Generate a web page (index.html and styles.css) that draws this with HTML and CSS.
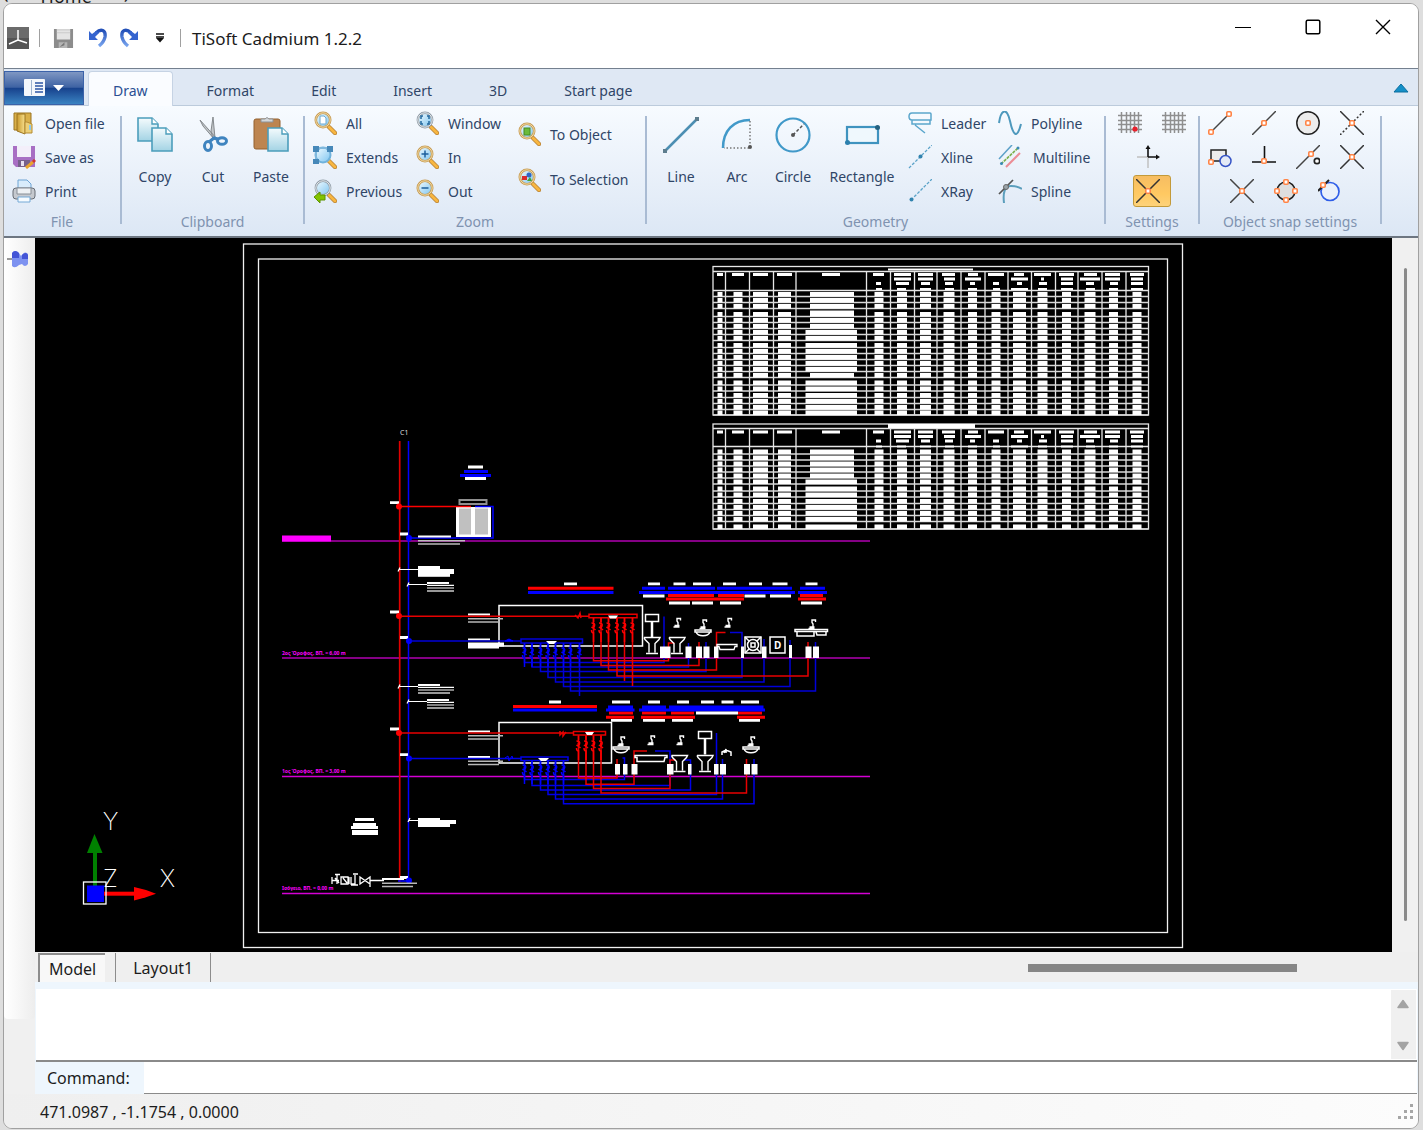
FILE: index.html
```html
<!DOCTYPE html>
<html lang="en">
<head>
<meta charset="utf-8">
<title>TiSoft Cadmium 1.2.2</title>
<link rel="stylesheet" href="styles.css">
</head>
<body>
<svg class="defs" aria-hidden="true">
  <defs>
    <linearGradient id="lens" x1="0" y1="0" x2="1" y2="1"><stop offset="0" stop-color="#f2fbff"/><stop offset="1" stop-color="#7cc4f0"/></linearGradient>
    <linearGradient id="paper" x1="0" y1="0" x2="0" y2="1"><stop offset="0" stop-color="#f4fbfd"/><stop offset="1" stop-color="#a3d3e4"/></linearGradient>
    <linearGradient id="folder" x1="0" y1="0" x2="1" y2="0"><stop offset="0" stop-color="#c99a2e"/><stop offset="1" stop-color="#f7e08e"/></linearGradient>
    <linearGradient id="swoosh" x1="0" y1="0" x2="0" y2="1"><stop offset="0" stop-color="#2350b8"/><stop offset="1" stop-color="#78a4ee"/></linearGradient>
    <g id="handle"><path d="M16 16L22 22" stroke="#b9853a" stroke-width="4.4" stroke-linecap="round"/><path d="M16 16L22 22" stroke="#f8b640" stroke-width="2.8" stroke-linecap="round"/></g>
    <g id="magnifier"><use href="#handle"/><circle cx="10" cy="9" r="7.2" fill="url(#lens)" stroke="#c79b52" stroke-width="2.6"/><circle cx="10" cy="9" r="7.2" fill="none" stroke="#f0d9a4" stroke-width="1"/></g>
    <g id="magnifier-grey"><use href="#handle"/><circle cx="10" cy="9" r="7.2" fill="url(#lens)" stroke="#8e9aa5" stroke-width="2.4"/><circle cx="10" cy="9" r="7.2" fill="none" stroke="#e2e7ea" stroke-width="1"/></g>
    <g id="sheet"><path d="M1 1h14l6 6v17H1z" fill="url(#paper)" stroke="#4b9dbb" stroke-width="1.6"/><path d="M15 1v6h6" fill="#fff" stroke="#4b9dbb" stroke-width="1.4"/></g>
    <g id="node"><rect x="-2.2" y="-2.2" width="4.4" height="4.4" rx="1" fill="#fff" stroke="#ff8446" stroke-width="1.6"/></g>
    <path id="grid" d="M0 4.500h24M0 9.500h24M0 13.500h24M0 18.500h24M3.500 1v21M8.500 1v21M12.500 1v21M16.500 1v21M20.500 1v21" stroke="#8f8f8f" stroke-width="1.500"/>

    <g id="cells">
      <path d="M713 0H1148.500" stroke="#d8d8d8" stroke-width="1.300"/>
      <path d="M717.500-2.300h5M733.500-2.300h9M753-2.300h15M778-2.300h13M874.500-2.300h9M897-2.300h10M920-2.300h11M943.500-2.300h11M968-2.300h9M991.500-2.300h9M1013-2.300h13M1037.500-2.300h10M1062-2.300h9M1084.500-2.300h11M1109-2.300h9M1132.500-2.300h9" stroke="#fff" stroke-width="4.600"/>
    </g>
    <g id="row-a"><use href="#cells"/><path d="M810-2.300h44" stroke="#fff" stroke-width="4.600"/></g>
    <g id="row-b"><use href="#cells"/><path d="M805.500-2.300h51.500" stroke="#fff" stroke-width="4.600"/></g>
    <g id="schedule-head" stroke="#fff">
      <path d="M717 0h6M732 0h12M753 0h15M777 0h15M822 0h18M873 0h11M894 0h17M918 0h15M942 0h13M968 0h10M988 0h16M1014 0h10M1034 0h17M1059 0h15M1084 0h13M1105 0h15M1130 0h14M894 4.500h17M918 4.500h15M944 4.500h11M965 4.500h16M1011 4.500h17M1041 4.500h3M1061 4.500h12M1080 4.500h20M1105 4.500h15M1131 4.500h12" stroke-width="2.800"/>
      <path d="M876 9h5M896 9h13M921 9h9M945 9h8M970 9h5M993 9h6M1017 9h5M1039 9h8M1061 9h12M1086 9h8M1110 9h8M1131 9h12" stroke-width="2.800"/>
      <path d="M876 14.500h6M897 14.500h9M920 14.500h11M945 14.500h9M968 14.500h9M993 14.500h7M1011 14.500h17M1038 14.500h9M1061 14.500h12M1086 14.500h9M1109 14.500h9M1131 14.500h12" stroke-width="2"/>
    </g>

    <g id="leader-text" stroke="#fff" fill="none" stroke-width="1.200">
      <path d="M-1 2l2-4M0 0H19"/><path d="M19-1.500h22" stroke-width="2"/><path d="M19 .800h36M19 3.500h36"/><path d="M19 6.500h32"/>
    </g>
    <g id="pipe-text" stroke="#b8b8b8" fill="none" stroke-width="1.600">
      <path d="M0 0h22" stroke="#fff" stroke-width="2"/><path d="M0 4.300h35M0 7.500h31"/>
    </g>
    <g id="tap" stroke="#fff" fill="none" stroke-width="1.400"><path d="M-3.500 8.500h6M-2.500 7h5M1 7V4l-1-1.500V0h3.500v2"/></g>
    <g id="basin" stroke="#fff" fill="none" stroke-width="1.500"><path d="M-8 0H8V2H-8zM-7 2c2 5 12 5 14 0"/></g>
    <g id="pedestal" stroke="#fff" fill="none" stroke-width="1.400"><path d="M-8 0H8L7 2 3 6V15M-8 0l1 2 4 4v9M-6 16H6"/></g>
    <g id="cistern" stroke="#fff" fill="none" stroke-width="1.500"><rect x="-6.500" y="0" width="13" height="7"/><path d="M0 7v16" stroke-width="2.500"/></g>
    <g id="tray" stroke="#fff" fill="none" stroke-width="1.300"><path d="M0 0H20V2H18L17 5H3L2 2H0z"/></g>
    <path id="valve" d="M0 0V4M-2 5q4 0 3 3t-3 1q3 2 4 3M-2 12q0 3 2 3V24M-1 8h2" fill="none" stroke-width="1.500"/>
  </defs>
</svg>

<div class="desktop">
  <div class="behind" aria-hidden="true"><span>‹</span><span>Home</span><span>›</span></div>
  <div class="window">
    <header class="titlebar">
      <div class="quick">
        <svg class="app-icon" viewBox="0 0 22 22"><rect width="22" height="22" fill="#555"/><path d="M0 0h22v11H0z" fill="#6b6b6b"/><path d="M11 3v10L2 17M11 13l9 3" fill="none" stroke="#fff" stroke-width="1.500"/></svg>
        <span class="rule"></span>
        <button class="q q-save" aria-label="Save"><svg viewBox="0 0 22 22"><path d="M1 1h20v20H1z" fill="#8c8c8c"/><path d="M4 1h14v11H4z" fill="#e4e4e4"/><path d="M4 2h14M4 5h14" stroke="#c8c8c8"/><path d="M6 15h9v6H6z" fill="#b5b5b5"/><path d="M7 20l5-5v3z" fill="#777"/></svg></button>
        <button class="q q-undo" aria-label="Undo"><svg viewBox="0 0 20 20"><path d="M8 5C13 0 18 2 17 9q-1 5-6 9" fill="none" stroke="url(#swoosh)" stroke-width="3.400"/><path d="M1 3v9h9L7 9l4-4-3-2-4 3z" fill="#3564cf"/></svg></button>
        <button class="q q-redo" aria-label="Redo"><svg viewBox="0 0 20 20"><path d="M12 5C7 0 2 2 3 9q1 5 6 9" fill="none" stroke="url(#swoosh)" stroke-width="3.400"/><path d="M19 3v9h-9l3-3-4-4 3-2 4 3z" fill="#3564cf"/></svg></button>
        <button class="q q-more" aria-label="Customize toolbar"><svg viewBox="0 0 10 10"><path d="M1 1h8M1 4h8" stroke="#111" stroke-width="1.300"/><path d="M1 5h8L5 9.500z" fill="#111"/></svg></button>
        <span class="rule rule-2"></span>
        <h1 class="title">TiSoft Cadmium 1.2.2</h1>
      </div>
      <div class="controls">
        <button aria-label="Minimize"><svg viewBox="0 0 16 16"><path d="M0 8.500h16" stroke="#000" stroke-width="1.200"/></svg></button>
        <button aria-label="Maximize"><svg viewBox="0 0 16 16"><rect x="1.200" y="1.200" width="13.600" height="13.600" rx="1.500" fill="none" stroke="#000" stroke-width="1.500"/></svg></button>
        <button aria-label="Close"><svg viewBox="0 0 16 16"><path d="M1 1l14 14M15 1L1 15" stroke="#000" stroke-width="1.400"/></svg></button>
      </div>
    </header>

    <nav class="tabs">
      <button class="app-menu" aria-label="Application menu">
        <svg viewBox="0 0 40 18"><rect width="21" height="17" rx="1" fill="#f4f7fb"/><path d="M7.500 1v15" stroke="#9fb4d0"/><path d="M11 4h8M11 7h8M11 10h8M11 13h8" stroke="#2c56a4" stroke-width="1.500"/><path d="M29 6h11l-5.500 6z" fill="#fff"/></svg>
      </button>
      <button class="tab active">Draw</button>
      <button class="tab">Format</button>
      <button class="tab">Edit</button>
      <button class="tab">Insert</button>
      <button class="tab">3D</button>
      <button class="tab">Start page</button>
      <button class="collapse" aria-label="Collapse ribbon"><svg viewBox="0 0 16 10"><path d="M1 9L8 1l7 8z" fill="#1590c8" stroke="#0d6f9f"/></svg></button>
    </nav>

    <div class="ribbon">
      <section class="group g-file">
        <div class="body">
          <div class="col">
            <button class="cmd"><svg viewBox="0 0 24 24"><path d="M2 2h17v17H2z" fill="#d9b04a" stroke="#9b7420"/><path d="M5 3h8v20l-8-3z" fill="url(#folder)" stroke="#9b7420"/><path d="M15 11l5 2v9h-7V11z" fill="#ecd078" stroke="#b58c33"/><path d="M18 14v5" stroke="#8fc7e8" stroke-width="2"/></svg>Open file</button>
            <button class="cmd"><svg viewBox="0 0 24 24"><path d="M1 1h22v21H4l-3-3z" fill="#a86fc4"/><path d="M5 1h14v11H5z" fill="#f3effa"/><path d="M6 15h12v7H6z" fill="#77618c"/><path d="M9 16h3v5H9z" fill="#e8e0f0"/><path d="M14 23l7-6" stroke="#eaa52e" stroke-width="3"/><path d="M21 17l2-2" stroke="#d3382c" stroke-width="3"/></svg>Save as</button>
            <button class="cmd"><svg viewBox="0 0 24 24"><path d="M6 11V1h9l4 4v6z" fill="#d9ecfb" stroke="#6ea4d4"/><rect x="1" y="9" width="22" height="11" rx="3" fill="#c5c9cf" stroke="#666c75"/><path d="M5 9h14v6H5z" fill="#eef1f4" stroke="#888e96"/><path d="M6 18h12v5H6z" fill="#f6fbff" stroke="#74a9d6"/></svg>Print</button>
          </div>
        </div>
        <h2>File</h2>
      </section>

      <section class="group g-clip">
        <div class="body">
          <button class="big"><svg viewBox="0 0 36 36"><use href="#sheet"/><use href="#sheet" x="14" y="10"/></svg>Copy</button>
          <button class="big"><svg viewBox="0 0 36 36"><path d="M5 3l3 6 12 14 2-1zM18 0l-2 14 2 8 2-1z" fill="#c3c7ca" stroke="#84898d" stroke-width="1"/><ellipse cx="13" cy="29" rx="3.500" ry="4.500" fill="none" stroke="#3f84bf" stroke-width="3"/><ellipse cx="27" cy="24" rx="4.500" ry="3.300" fill="none" stroke="#3f84bf" stroke-width="3"/><path d="M14 25l5-4 4 1" fill="none" stroke="#3f84bf" stroke-width="3"/></svg>Cut</button>
          <button class="big"><svg viewBox="0 0 36 36"><rect x="1" y="2" width="26" height="30" rx="2" fill="#bd8550" stroke="#93602f"/><path d="M8 5V2h4q2-3 4 0h4v3z" fill="#d4d7d9" stroke="#8d9194"/><use href="#sheet" x="14" y="10"/></svg>Paste</button>
        </div>
        <h2>Clipboard</h2>
      </section>

      <section class="group g-zoom">
        <div class="body">
          <div class="col">
            <button class="cmd"><svg viewBox="0 0 24 24"><use href="#magnifier"/><path d="M7 5h4l2 2v6H7z" fill="#fff" stroke="#6da9cf"/></svg>All</button>
            <button class="cmd"><svg viewBox="0 0 24 24"><use href="#handle"/><circle cx="10" cy="10" r="7.500" fill="url(#lens)" stroke="#6fb2dc" stroke-width="2"/><path d="M0 1h6v6H0zM14 1h6v6h-6zM0 14h6v5H0z" fill="#4688b9"/><path d="M6 3h8M3 7v7" stroke="#7fb8dd" stroke-width="2"/></svg>Extends</button>
            <button class="cmd"><svg viewBox="0 0 24 24"><use href="#magnifier-grey"/><path d="M1 18l6-5v3h5v5H7v3z" fill="#83c300" stroke="#5c9300"/></svg>Previous</button>
          </div>
          <div class="col">
            <button class="cmd"><svg viewBox="0 0 24 24"><use href="#magnifier-grey"/><path d="M8 5H6v3M12 5h2v3M6 10v3h2M14 10v3h-2" fill="none" stroke="#22689e" stroke-width="1.500"/></svg>Window</button>
            <button class="cmd"><svg viewBox="0 0 24 24"><use href="#magnifier"/><path d="M6.500 9h7M10 5.500v7" stroke="#1c5f9c" stroke-width="1.500"/></svg>In</button>
            <button class="cmd"><svg viewBox="0 0 24 24"><use href="#magnifier"/><path d="M6.500 9h7" stroke="#1c5f9c" stroke-width="1.500"/></svg>Out</button>
          </div>
          <div class="col pair">
            <button class="cmd"><svg viewBox="0 0 24 24"><use href="#magnifier"/><rect x="7" y="6" width="6" height="7" fill="#6bbb3a" stroke="#478a22"/></svg>To Object</button>
            <button class="cmd"><svg viewBox="0 0 24 24"><use href="#magnifier"/><path d="M5 8h5v4H5z" fill="#d92c2c"/><circle cx="12" cy="7" r="2.500" fill="#3267c5"/><path d="M10 13l3-4 2 4z" fill="#44a533"/></svg>To Selection</button>
          </div>
        </div>
        <h2>Zoom</h2>
      </section>

      <section class="group g-geo">
        <div class="body">
          <button class="big"><svg viewBox="0 0 36 36"><path d="M2 34L34 2" stroke="#4c8fb3" stroke-width="2.500"/><path d="M0 32h4v4H0zM32 0h4v4h-4z" fill="#5d7d8e"/></svg>Line</button>
          <button class="big"><svg viewBox="0 0 36 36"><path d="M4 31C4 14 14 3 31 3" fill="none" stroke="#4199c9" stroke-width="2.500"/><path d="M31 4v27H5" fill="none" stroke="#777" stroke-width="1.500" stroke-dasharray="1.500 2"/><circle cx="31" cy="30" r="2" fill="#555"/></svg>Arc</button>
          <button class="big"><svg viewBox="0 0 36 36"><circle cx="18" cy="18" r="16.500" fill="none" stroke="#4199c9" stroke-width="2.200"/><path d="M18 18L29 7" stroke="#555" stroke-width="1.500" stroke-dasharray="3 2"/><circle cx="18" cy="18" r="2" fill="#555"/></svg>Circle</button>
          <button class="big wide"><svg viewBox="0 0 36 36"><rect x="3" y="10" width="31" height="16" fill="#eff8fd" stroke="#3f93bf" stroke-width="2.200"/><circle cx="3.500" cy="25.500" r="2.500" fill="#2c80ae"/><circle cx="33.500" cy="10.500" r="2.500" fill="#24607f"/></svg>Rectangle</button>
          <div class="col">
            <button class="cmd"><svg viewBox="0 0 24 24"><path d="M4 2h18q1 0 1 1v6H4q-3 0-3-3.500T4 2zM4 9v4h18V9M7 14l10 8" fill="none" stroke="#5ba6cc" stroke-width="1.500"/></svg>Leader</button>
            <button class="cmd"><svg viewBox="0 0 24 24"><path d="M1 23L24 0" stroke="#5aa2c8" stroke-width="1.300" stroke-dasharray="3 1.500"/><circle cx="12.500" cy="11.500" r="2" fill="#3183ae"/></svg>Xline</button>
            <button class="cmd"><svg viewBox="0 0 24 24"><path d="M3 21L24 0" stroke="#5aa2c8" stroke-width="1.300" stroke-dasharray="3 1.500"/><circle cx="3.500" cy="20.500" r="2" fill="#3183ae"/></svg>XRay</button>
          </div>
          <div class="col">
            <button class="cmd"><svg viewBox="0 0 24 24"><path d="M1 12C3-2 9-4 12 10S19 29 23 13" fill="none" stroke="#4e99bd" stroke-width="2"/></svg>Polyline</button>
            <button class="cmd multi"><svg viewBox="0 0 24 24"><path d="M1 14L14 0" stroke="#5ba0c8" stroke-width="1.500"/><path d="M3 19L20 3" stroke="#7cb14e" stroke-width="1.700" stroke-dasharray="3 1"/><path d="M8 22L22 8" stroke="#ec8c95" stroke-width="2"/><circle cx="3.500" cy="18.500" r="1.500" fill="#3b8ab5"/><circle cx="20" cy="3" r="1.500" fill="#3b8ab5"/></svg>Multiline</button>
            <button class="cmd"><svg viewBox="0 0 24 24"><path d="M6 24Q4 7 13 7q7 0 11 3" fill="none" stroke="#5b9ebc" stroke-width="2"/><path d="M1 15L15 1" stroke="#555" stroke-width="1.700"/><circle cx="8" cy="8" r="2.500" fill="#9aa4aa" stroke="#666"/></svg>Spline</button>
          </div>
        </div>
        <h2>Geometry</h2>
      </section>

      <section class="group g-set">
        <div class="body icons">
          <div class="line">
            <button aria-label="Snap to grid"><svg viewBox="0 0 24 24"><use href="#grid"/><circle cx="17" cy="18" r="2.600" fill="#e8202c"/></svg></button>
            <button aria-label="Show grid"><svg viewBox="0 0 24 24"><use href="#grid"/></svg></button>
          </div>
          <div class="line ortho">
            <button aria-label="Ortho"><svg viewBox="0 0 24 24"><path d="M1 12h11v11" fill="none" stroke="#c0c0c0" stroke-width="1.500"/><path d="M12 12V3M12 12h9" fill="none" stroke="#111" stroke-width="1.600"/><path d="M9.500 4L12 0l2.500 4zM20 9.500l4 2.500-4 2.500z" fill="#111"/></svg></button>
          </div>
          <div class="line">
            <button class="pressed" aria-label="Object snap" aria-pressed="true"><svg viewBox="0 0 24 24"><path d="M0 0l24 24M24 0L0 24" stroke="#333" stroke-width="1.500"/><use href="#node" x="12" y="12"/></svg></button>
          </div>
        </div>
        <h2>Settings</h2>
      </section>

      <section class="group g-snap">
        <div class="body icons">
          <div class="line">
            <button aria-label="Endpoint"><svg viewBox="0 0 24 24"><path d="M3 21L21 3" stroke="#444" stroke-width="1.500"/><use href="#node" x="3" y="21"/><use href="#node" x="21" y="3"/></svg></button>
            <button aria-label="Midpoint"><svg viewBox="0 0 24 24"><path d="M0 24L24 0" stroke="#444" stroke-width="1.500"/><use href="#node" x="12" y="12"/></svg></button>
            <button aria-label="Center"><svg viewBox="0 0 24 24"><circle cx="12" cy="12" r="11.200" fill="#ececec" stroke="#222" stroke-width="1.500"/><use href="#node" x="12" y="12"/></svg></button>
            <button aria-label="Apparent intersection"><svg viewBox="0 0 24 24"><path d="M0 0l24 24" stroke="#333" stroke-width="1.500"/><path d="M24 0L0 24" stroke="#333" stroke-width="1.500" stroke-dasharray="2 2"/><use href="#node" x="12" y="12"/></svg></button>
          </div>
          <div class="line">
            <button aria-label="Insertion"><svg viewBox="0 0 24 24"><path d="M3 16V5h15v11z" fill="#ededed" stroke="#222" stroke-width="1.500"/><circle cx="17.500" cy="16" r="5.500" fill="#e4eaf6" stroke="#3553c6" stroke-width="1.500"/><use href="#node" x="3" y="17"/></svg></button>
            <button aria-label="Perpendicular"><svg viewBox="0 0 24 24"><path d="M0 17h24M12.500 1v15" stroke="#111" stroke-width="1.600"/><use href="#node" x="12" y="16"/></svg></button>
            <button aria-label="Nearest"><svg viewBox="0 0 24 24"><path d="M0 24L24 0" stroke="#444" stroke-width="1.500"/><use href="#node" x="15" y="9"/><circle cx="21" cy="16" r="2.700" fill="#fff" stroke="#222" stroke-width="1.700"/></svg></button>
            <button aria-label="Intersection"><svg viewBox="0 0 24 24"><path d="M0 0l24 24M24 0L0 24" stroke="#333" stroke-width="1.500"/><use href="#node" x="12" y="12"/></svg></button>
          </div>
          <div class="line">
            <button aria-label="Node"><svg viewBox="0 0 24 24"><path d="M0 0l24 24M24 0L0 24" stroke="#444" stroke-width="1.500"/><use href="#node" x="12" y="12"/></svg></button>
            <button aria-label="Quadrant"><svg viewBox="0 0 24 24"><circle cx="12" cy="12" r="9" fill="#dedede" stroke="#222" stroke-width="1.500"/><use href="#node" x="12" y="3"/><use href="#node" x="12" y="21"/><use href="#node" x="3" y="12"/><use href="#node" x="21" y="12"/></svg></button>
            <button aria-label="Tangent"><svg viewBox="0 0 24 24"><circle cx="12" cy="12.500" r="9" fill="#eaf1fb" stroke="#2f5ee8" stroke-width="1.700"/><path d="M0 12L11 1" stroke="#222" stroke-width="2"/><use href="#node" x="5" y="6"/></svg></button>
          </div>
        </div>
        <h2>Object snap settings</h2>
      </section>
    </div>

    <main class="workspace">
      <aside class="dock">
        <button aria-label="Pin panel"><svg viewBox="0 0 22 18"><path d="M0 9h6" stroke="#999" stroke-width="2"/><path d="M5 3q3-4 7 0l2 3q4-6 7-2v10q-3 4-6 0l-3 1q-4 4-7 1z" fill="#7d92f0"/><path d="M5 3q3-4 7 0v5H5zM15 5q4-4 6 0v4h-6z" fill="#4455d6"/></svg></button>
      </aside>

      <div class="editor">
        <div class="view">
          <svg class="drawing" viewBox="35 238 1357 714" role="img" aria-label="Plumbing riser diagram">
            <g fill="none" stroke="#f0f0f0" stroke-width="1.300">
              <rect x="243.500" y="244" width="939" height="703.500"/>
              <rect x="258.500" y="259" width="909" height="673.500"/>
            </g>

            <g fill="none" stroke="#e6e6e6" stroke-width="1.300">
              <rect x="713" y="266.500" width="435.500" height="148.500"/>
              <path d="M713 271.500h435.500M713 290.500h435.500"/>
              <path d="M725.500 271V415M749.500 271V415M773.500 271V415M796 271V415M866.500 271V415M890.500 271V415M914.500 271V415M937 271V415M961 271V415M985 271V415M1008 271V415M1031.500 271V415M1055.500 271V415M1078 271V415M1102 271V415M1126 271V415"/>
              <rect x="713" y="424" width="435.500" height="105"/>
              <path d="M713 428.500h435.500M713 446.500h435.500"/>
              <path d="M725.500 428V529M749.500 428V529M773.500 428V529M796 428V529M866.500 428V529M890.500 428V529M914.500 428V529M937 428V529M961 428V529M985 428V529M1008 428V529M1031.500 428V529M1055.500 428V529M1078 428V529M1102 428V529M1126 428V529"/>
            </g>
            <path d="M888 269.500h85" stroke="#fff" stroke-width="2"/>
            <path d="M888 426h87" stroke="#fff" stroke-width="4"/>
            <use href="#schedule-head" y="274.500"/>
            <use href="#schedule-head" y="432"/>
            <use href="#row-a" y="296.500"/><use href="#row-a" y="302.500"/><use href="#row-a" y="308.500"/><use href="#row-a" y="316.500"/><use href="#row-a" y="322.500"/><use href="#row-a" y="328.500"/><use href="#row-b" y="334.500"/><use href="#row-b" y="340.500"/><use href="#row-b" y="347.500"/><use href="#row-b" y="353.500"/><use href="#row-b" y="359.500"/><use href="#row-b" y="365.500"/><use href="#row-b" y="371.500"/><use href="#row-a" y="377.500"/><use href="#row-b" y="385"/><use href="#row-b" y="391"/><use href="#row-b" y="397.500"/><use href="#row-b" y="403.500"/><use href="#row-b" y="409.500"/><use href="#row-b" y="415"/>
            <use href="#row-a" y="454"/><use href="#row-a" y="460"/><use href="#row-a" y="466"/><use href="#row-a" y="472"/><use href="#row-a" y="478"/><use href="#row-b" y="484"/><use href="#row-b" y="491"/><use href="#row-b" y="497"/><use href="#row-b" y="503.500"/><use href="#row-b" y="509.500"/><use href="#row-b" y="515.500"/><use href="#row-b" y="521.500"/><use href="#row-b" y="529"/>
            <path d="M810 312h44" stroke="#fff" stroke-width="3"/>

            <g stroke="#b000b0" stroke-width="1.500">
              <path d="M282 541H870M282 658H870"/><path d="M282 776.500H870M282 893.500H870" stroke="#d400d4"/>
              <path d="M282 538.500h49" stroke="#f0f" stroke-width="6"/>
            </g>
            <g class="level">
              <text x="282" y="655">2ος Όροφος, ΒΠ. = 6,00 m</text>
              <text x="282" y="773">1ος Όροφος, ΒΠ. = 3,00 m</text>
              <text x="282" y="890">Ισόγειο, ΒΠ. = 0,00 m</text>
            </g>
            <text class="riser" x="400" y="435">C1</text>

            <path d="M399.700 441V882" stroke="#e00000" stroke-width="1.700"/>
            <path d="M408.500 441V882" stroke="#00f" stroke-width="1.500"/>

            <g fill="none" stroke-width="3">
              <path d="M468 467h15M465 478.500h21" stroke="#fff"/><path d="M464 471.500h24M460 475.500h31" stroke="#00f"/>
              <rect x="459.500" y="500" width="27" height="4" stroke="#909090" stroke-width="2"/>
            </g>
            <rect x="456" y="507" width="35" height="30" fill="#fff"/><path d="M459 508.500h12v26h-12zM475 508.500h13v26h-13z" fill="#c0c0c0"/>
            <path d="M400 506.500H471" stroke="#f00" stroke-width="1.500"/>
            <path d="M475 506.500h18V538H409" stroke="#00f" stroke-width="1.500" fill="none"/>
            <path d="M390 502.700h9M400 534h8M390 612h9M400 637.500h8M390 729h9M400 754.700h8M400 877.500h8" stroke="#fff" stroke-width="2.800"/>
            <g fill="#f00"><circle cx="399" cy="506.500" r="3"/><circle cx="399" cy="616" r="3"/><circle cx="399" cy="733" r="3"/></g>
            <g fill="#00f"><circle cx="409" cy="538" r="3"/><circle cx="409" cy="641" r="3"/><circle cx="409" cy="758.500" r="3"/><circle cx="409" cy="880.500" r="3"/></g>
            <g fill="none" stroke="#fff" stroke-width="2"><path d="M418 536.500h33"/><path d="M418 540.700h47M418 544h42" stroke="#bbb" stroke-width="1.500"/></g>
            <use href="#leader-text" x="399" y="569.500"/><path d="M418 566h22v3h14v5h-4v2.500h-32z" fill="#fff"/>
            <use href="#leader-text" x="408" y="584.500"/>
            <use href="#leader-text" x="399" y="686.500"/>
            <use href="#leader-text" x="408" y="701.500"/>
            <g stroke="#000" stroke-width="2"><path d="M454.500 583v9M454.500 700v9" stroke-width="17" transform="translate(8 0)"/></g>
            <path d="M408 822l2-4M409 820.500h10" stroke="#fff" stroke-width="1.200"/><path d="M418 818h22v2h16v4h-6v3h-32z" fill="#fff"/>
            <g stroke="#fff" fill="none"><path d="M355 819.500h19" stroke-width="3"/><path d="M353 824.500h23M351 827.500h27" stroke-width="3"/><path d="M352 832.500h26" stroke-width="5"/></g>
            <g stroke="#fff" fill="none" stroke-width="1.300">
              <path d="M332 877v7M332 880.500h7M335 874.500h5M337 875v9M335 878l4 5M341 877h7v7h-7zM343 878l4 5M349 877v7M351 877v7h4v-7M353 874h5M355 875v4M351 885h7M360 877l10 7v-7l-10 7zM370 877v10M370 880.500h14"/>
            </g>
            <use href="#pipe-text" x="382" y="879"/>
            <path d="M398 881h10" stroke="#00f" stroke-width="1.500"/>

            <g fill="none" stroke="#fff" stroke-width="1.500">
              <path d="M499 646V605.500H642.500V646z"/><path d="M499 763V722.500H611.500V763z"/>
            </g>
            <use href="#pipe-text" x="468" y="614.500"/><use href="#pipe-text" x="468" y="639.500"/><use href="#pipe-text" x="468" y="731.500"/><use href="#pipe-text" x="468" y="757"/>
            <path d="M468 642.500h36v4h-5v2h-31z" fill="#fff"/>

            <!-- second floor: captions above the fixtures -->
            <g fill="none" stroke-width="3">
              <path d="M528 588.200h85.500M800 595.500h23M668 595.500h46M718 595.500h26M666 599h78M798 599h28" stroke="#f00"/>
              <path d="M528 592.500h85.500M642 588.200h23M668 588.200h47M717 588.200h75M800 588.200h25M639 592.500h156M798 592.500h29" stroke="#00f"/>
              <path d="M564 583.800h13M648 583.800h12M673.500 583.800h12M693 583.800h18M723 583.800h13M749 583.800h13M772.500 583.800h15M805.500 583.800h12M643 596h21.500M744.500 596h21M770 596h21M669 603h21M692 603h21M720 603h21M801 603h21" stroke="#fff" stroke-width="2.800"/>
            </g>
            <!-- second floor: supply runs -->
            <g fill="none" stroke="#0000d8" stroke-width="1.500">
              <path d="M409 641H521M521 639h61.500v4H521z"/>
              <path d="M524.500 643V662.500H664V616.500M532 643V667h156.500V643M540.500 643V671.500H706V642M548 643V677.500H742V632.500H730M555.500 643V682H764V639M563.500 643V686.500H790V640M570.500 643V691H815.500V642M579.500 643V696"/>
            </g>
            <g fill="none" stroke="#e80000" stroke-width="1.500">
              <path d="M400 616.200H589M589 614.200h48v3.600h-48z"/>
              <path d="M593.500 618V660.700h75V643h6M601 618V665.500h98V642M608.500 618V670H716.500V632.500h9M617 618V676H808V642M624.500 618V681M632.500 618V686M575 615l3 3 2-5 1 5"/>
            </g>
            <g stroke="#f00"><use href="#valve" x="593.500" y="618"/><use href="#valve" x="601" y="618"/><use href="#valve" x="608.500" y="618"/><use href="#valve" x="617" y="618"/><use href="#valve" x="624.500" y="618"/><use href="#valve" x="632.500" y="618"/></g>
            <g stroke="#00f"><use href="#valve" x="524.500" y="643"/><use href="#valve" x="532" y="643"/><use href="#valve" x="540.500" y="643"/><use href="#valve" x="548" y="643"/><use href="#valve" x="555.500" y="643"/><use href="#valve" x="563.500" y="643"/><use href="#valve" x="570.500" y="643"/><use href="#valve" x="579.500" y="643"/><path d="M505 641l4-2 4 2z" fill="#00f"/></g>
            <path d="M608 615.500h10l-2 3h-6zM546 641h11l-3 3h-5z" fill="#fff"/>
            <path d="M660 646.500h10.500V658H660zM685.500 646.500h6V658h-6zM696 646.500h6V658h-6zM703.500 646.500h6V658h-6zM714 646.500h4.500V658H714zM741 646.500h3V658h-3zM762 646.500h4.500V658H762zM789 645h3v13h-3zM805.500 646.500h6V658h-6zM813 646.500h6V658h-6z" fill="#fff"/>
            <!-- second floor: fixtures -->
            <use href="#cistern" x="652" y="614.500"/><use href="#pedestal" x="652" y="637.500"/>
            <use href="#tap" x="677" y="618.500"/><use href="#pedestal" x="677" y="637.500"/>
            <use href="#tap" x="703" y="620"/><use href="#basin" x="703" y="630"/>
            <use href="#tap" x="728" y="618.500"/><use href="#tray" x="717" y="644.500"/>
            <g fill="none" stroke="#fff" stroke-width="1.500"><rect x="745" y="637" width="16" height="16"/><circle cx="753" cy="645" r="5.500"/><rect x="751" y="643" width="4" height="4"/><path d="M745 637l4 4M761 637l-4 4M745 653l4-4M761 653l-4-4"/><rect x="770" y="637" width="15" height="16"/></g>
            <text class="mark" x="774" y="649">D</text>
            <use href="#tap" x="812" y="620"/><path d="M795 629.500h32.500v2H795zM797 632v4h17v-4M816 632l1 3h9v-3" fill="none" stroke="#fff" stroke-width="1.500"/>

            <!-- first floor: captions above the fixtures -->
            <g fill="none" stroke-width="3">
              <path d="M513 706.500h84M609 713h24M642 713h24M671 713h23M738 713h24M606 717.300h28M641 717.300h54M737 717.300h28" stroke="#f00"/>
              <path d="M513 710h84M608 707h25M642 707h24M669 707h94.500M606 710h28.500M639 710h126" stroke="#00f"/>
              <path d="M549 702h12M612 702h18M648 702h12M677 702h12M701 702h13M721.500 702h12M741 702h18M611 720.300h21M643 720.300h22M672 720.300h21M739 720.300h21M696 713h42" stroke="#fff" stroke-width="2.800"/>
            </g>
            <!-- first floor: supply runs -->
            <g fill="none" stroke="#0000e8" stroke-width="1.500">
              <path d="M409 758.500H521M521 757h47v3.500h-47z"/>
              <path d="M524.500 760V779.500h100V758h-2M532 760V785.500H670V751H655M540.500 760V790h150V760h-6M548 760V794.500H716.500V733M555.500 760V799h167V759M563.500 760V803.700H754V759"/>
            </g>
            <g fill="none" stroke="#e80000" stroke-width="1.500">
              <path d="M400 733H573M573.500 731.500h32v3.500h-32z"/>
              <path d="M578.500 735V778H617V759M586 735V784.300h48V751h13M593.500 735V788.500H670V760h6M601 735V793H746.500V759M560 731v4l3-3v4l3-4"/>
            </g>
            <g stroke="#f00"><use href="#valve" x="578.500" y="736"/><use href="#valve" x="586" y="736"/><use href="#valve" x="593.500" y="736"/><use href="#valve" x="601" y="736"/></g>
            <g stroke="#00f"><use href="#valve" x="524.500" y="760"/><use href="#valve" x="532" y="760"/><use href="#valve" x="540.500" y="760"/><use href="#valve" x="548" y="760"/><use href="#valve" x="555.500" y="760"/><use href="#valve" x="563.500" y="760"/><path d="M505 758l3-2 1 5 3-5 1 3" fill="none"/></g>
            <path d="M585 732h9l-2 3h-5zM538 758h11l-3 3h-5z" fill="#fff"/>
            <path d="M615 764h5v10.500h-5zM623 764h4.500v10.500H623zM631.500 764h6v10.500h-6zM667 764h6.500v10.500H667zM688 764h3.500v10.500H688zM714 764h4.500v10.500H714zM720 764h6v10.500h-6zM744 764h6v10.500h-6zM751.500 764h6v10.500h-6z" fill="#fff"/>
            <!-- first floor: fixtures -->
            <use href="#tap" x="621" y="737"/><use href="#basin" x="621" y="747"/>
            <use href="#tap" x="651" y="736"/><path d="M635 755.500h32v2h-2l-1 4h-27v-4h-2z" fill="none" stroke="#fff" stroke-width="1.500"/>
            <use href="#tap" x="680" y="736"/><use href="#pedestal" x="679.500" y="755.500"/>
            <use href="#cistern" x="705" y="731.500"/><use href="#pedestal" x="705" y="755.500"/>
            <path d="M722 755v-3l4-2 5 2v4M724 753l2-4v4" fill="none" stroke="#fff" stroke-width="1.500"/>
            <use href="#tap" x="751" y="737"/><use href="#basin" x="751" y="747"/>

            <!-- coordinate system marker -->
            <path d="M95 852v34" stroke="#008000" stroke-width="4"/><path d="M94.500 834l8 19H87z" fill="#008000"/>
            <rect x="87" y="885.500" width="17" height="16.500" fill="#00f"/>
            <path d="M104 893.700h30" stroke="#f00" stroke-width="4"/><path d="M134 887l12 3 10 3.700-10 3.500-12 3.300z" fill="#f00"/>
            <rect x="83.500" y="882" width="22.500" height="22" fill="none" stroke="#fff" stroke-width="1.300"/>
            <g class="axis"><text x="110.500" y="830">Y</text><text x="110.500" y="887">Z</text><text x="167.500" y="887">X</text></g>
          </svg>
          <div class="vscroll"><div class="thumb"></div></div>
        </div>

        <div class="sheets">
          <button class="sheet current">Model</button>
          <button class="sheet">Layout1</button>
          <div class="hthumb"></div>
        </div>

        <div class="console">
          <div class="log">
            <textarea aria-label="Command history" readonly></textarea>
            <div class="log-scroll">
              <button aria-label="Scroll up"><svg viewBox="0 0 12 10"><path d="M6 1.500L11 8.500H1z" fill="#a3a3a3" stroke="#a3a3a3" stroke-linejoin="round" stroke-width="1.500"/></svg></button>
              <button aria-label="Scroll down"><svg viewBox="0 0 12 10"><path d="M6 8.500L1 1.500h10z" fill="#a3a3a3" stroke="#a3a3a3" stroke-linejoin="round" stroke-width="1.500"/></svg></button>
            </div>
          </div>
          <div class="prompt">
            <label for="command">Command:</label>
            <input id="command" type="text">
          </div>
        </div>
      </div>
    </main>

    <footer class="status">
      <span>471.0987 , -1.1754 , 0.0000</span>
      <svg viewBox="0 0 16 16"><path d="M12 0h3v3h-3zM6 6h3v3H6zM12 6h3v3h-3zM0 12h3v3H0zM6 12h3v3H6zM12 12h3v3h-3z" fill="#a6a6a6"/></svg>
    </footer>
  </div>
</div>
</body>
</html>
```
FILE: styles.css
```css
* { box-sizing: border-box; }

body {
  margin: 0;
  background: #dedede;
  color: #1c1c1c;
  font-family: "Noto Sans", "Open Sans", sans-serif;
  font-size: 14px;
}

button {
  margin: 0;
  padding: 0;
  border: 0;
  background: none;
  color: inherit;
  font: inherit;
}

svg { display: block; flex: none; }
h1, h2 { margin: 0; font-weight: 400; }
.defs { position: absolute; width: 0; height: 0; }

.desktop { min-height: 100vh; padding: 0 4px 1px 3px; }

/* Bottom edge of the window that lies behind this one */
.behind {
  display: flex;
  align-items: flex-end;
  gap: 32px;
  height: 3px;
  overflow: hidden;
  font-size: 18px;
  line-height: 14px;
}

.window {
  overflow: hidden;
  border: 1px solid #a0a0a0;
  border-radius: 9px;
  background: #f0f0f0;
}

/* Title bar */
.titlebar {
  display: flex;
  justify-content: space-between;
  height: 65px;
  border-bottom: 1px solid #74808f;
  background: #fff;
}
.quick { display: flex; align-items: center; padding: 4px 0 0 3px; }
.app-icon { width: 22px; height: 22px; }
.rule { width: 1px; height: 18px; margin: 0 13px 0 10px; background: #a0a0a0; }
.rule-2 { margin: 0 11px 0 15px; }
.q svg { width: 100%; height: 100%; }
.q-save { width: 21px; height: 21px; margin-right: 14px; }
.q-undo { width: 20px; height: 20px; margin-right: 11px; }
.q-redo { width: 20px; height: 20px; margin-right: 16px; }
.q-more { width: 10px; height: 10px; }
.title { font-size: 17px; }
.controls { display: flex; height: 45px; }
.controls button { display: grid; place-items: center; width: 70px; }
.controls svg { width: 16px; height: 16px; }

/* Ribbon tabs */
.tabs {
  display: flex;
  align-items: flex-end;
  height: 37px;
  padding-top: 2px;
  background: #dfe8f4;
  border-bottom: 1px solid #bccbdc;
  color: #2f4567;
}
.app-menu {
  display: grid;
  place-items: center;
  width: 80px;
  height: 34px;
  margin-right: 4px;
  border: 1px solid #3b62a9;
  background: linear-gradient(#7f97c3, #3d62a3 48%, #17418c 50%, #3a83c2);
}
.app-menu svg { width: 40px; height: 18px; }
.tab { height: 34px; padding: 4px 28px 0 29px; }
.tab.active {
  margin: 0 5px -1px 0;
  padding: 3px 24px 0;
  height: 35px;
  border: 1px solid #c6d3e4;
  border-bottom: 0;
  border-radius: 4px 4px 0 0;
  background: #fafcff;
  color: #2b4f93;
}
.collapse { align-self: center; margin: 0 9px 0 auto; }
.collapse svg { width: 16px; height: 10px; }

/* Ribbon groups */
.ribbon {
  display: flex;
  height: 132px;
  border-bottom: 2px solid #6d7681;
  background: linear-gradient(#f7fbff, #eaf1fa 50%, #dce7f5);
  color: #2f4567;
}
.group {
  display: flex;
  flex: none;
  flex-direction: column;
  border-right: 2px solid;
  border-image: linear-gradient(transparent 8%, #a9bbd3 8%, #a9bbd3 90%, transparent 90%) 1;
}
.group h2 { color: #8093b0; font-size: 14px; line-height: 28px; text-align: center; white-space: nowrap; }
.body { display: flex; height: 102px; }
.g-file { width: 118px; }
.g-file .body { padding-left: 8px; }
.g-clip { width: 183px; }
.g-clip .body { padding-left: 4px; }
.g-zoom { width: 342px; }
.g-zoom .body { padding-left: 8px; }
.g-geo { width: 459px; }
.g-geo .body { padding-left: 6px; }
.g-set { width: 94px; }
.g-snap { width: 182px; }
.g-snap .icons { padding-right: 8px; }

.col { display: flex; flex: none; flex-direction: column; }
.g-zoom .col { width: 102px; }
.g-geo .col { width: 90px; }
.g-geo .big.wide { width: 82px; margin-right: 5px; }
.pair { justify-content: space-evenly; }
.g-zoom .pair { width: 126px; }
.cmd {
  display: flex;
  align-items: center;
  gap: 9px;
  height: 34px;
  white-space: nowrap;
}
.cmd svg { width: 24px; height: 24px; }
.multi { gap: 11px; }
.big {
  display: flex;
  flex: none;
  flex-direction: column;
  align-items: center;
  gap: 14px;
  width: 56px;
  padding-top: 11px;
  line-height: 20px;
}
.g-clip .big { width: 58px; }
.big svg { width: 36px; height: 36px; }

.icons { flex-direction: column; }
.line { display: flex; align-items: center; justify-content: center; gap: 20px; height: 34px; }
.line svg { width: 24px; height: 24px; }
.ortho { padding-right: 8px; }
.pressed {
  display: grid;
  place-items: center;
  width: 38px;
  height: 32px;
  border: 1px solid #c39a3a;
  border-radius: 3px;
  background: linear-gradient(#f6bd62, #ffc962 60%, #fdd27a);
}
.pressed svg { margin-right: 8px; }

/* Drawing area */
.workspace { display: flex; }
.dock {
  flex: none;
  width: 31px;
  margin-bottom: 75px;
  padding: 12px 0 0 3px;
  border-radius: 0 0 4px 4px;
  background: linear-gradient(90deg, #fff, #f8f8f8 40%, #ededed);
}
.dock svg { width: 22px; height: 18px; }
.editor { flex: 1; min-width: 0; }
.view { display: flex; }
.drawing { flex: 1; width: 100%; min-width: 0; height: auto; background: #000; }
.vscroll { width: 26px; padding: 30px 11px 31px 12px; }
.thumb { width: 3px; height: 100%; border-radius: 2px; background: #8a8a8a; }

.level text { font-size: 5px; font-weight: 700; fill: #f0f; }
.riser { font-size: 7px; fill: #ddd; }
.mark { font-size: 10px; font-weight: 700; fill: #fff; }
.axis text { font-family: Inter, "Noto Sans", sans-serif; font-size: 24px; font-weight: 200; fill: #fff; text-anchor: middle; }

/* Sheet tabs */
.sheets {
  display: flex;
  height: 30px;
  padding: 1px 121px 0 3px;
  background: #efefef;
  font-size: 16px;
}
.sheet { padding: 0 17px; border-right: 1px solid #8c8c8c; }
.sheet.current {
  margin-right: 11px;
  padding: 0 9px;
  border: 0;
  border-top: 2px solid #8c8c8c;
  border-left: 2px solid #8c8c8c;
  background: #f8f8f8;
  box-shadow: 10px 0 0 #efefef, 11px 0 0 #8c8c8c;
}
.hthumb { width: 269px; height: 8px; margin: 11px 0 0 auto; background: #868686; }

/* Command console */
.console { padding: 7px 1px 0 0; background: #eef6fd; }
.log { display: flex; height: 73px; margin-left: 1px; padding: 1px 1px 1px 0; border-bottom: 2px solid #8a8a8a; background: #fff; }
textarea { flex: 1; min-width: 0; border: 0; outline: 0; resize: none; background: #fff; font: inherit; }
.log-scroll {
  display: flex;
  flex-direction: column;
  justify-content: space-between;
  width: 25px;
  padding: 9px 6px 8px;
  background: #f0f0f0;
}
.log-scroll svg { width: 12px; height: 10px; }
.prompt { display: flex; height: 32px; }
.prompt label { width: 109px; padding-left: 12px; font-size: 16px; line-height: 32px; }
.prompt input {
  flex: 1;
  min-width: 0;
  border: 0;
  border-bottom: 1px solid #8a8a8a;
  outline: 0;
  background: #fff;
  font: inherit;
}

/* Status bar */
.status {
  display: flex;
  align-items: center;
  justify-content: space-between;
  height: 34px;
  padding: 2px 4px 0 36px;
  background: linear-gradient(90deg, #efefef, #fcfcfc);
  font-size: 16px;
}
.status svg { width: 16px; height: 16px; }
```
